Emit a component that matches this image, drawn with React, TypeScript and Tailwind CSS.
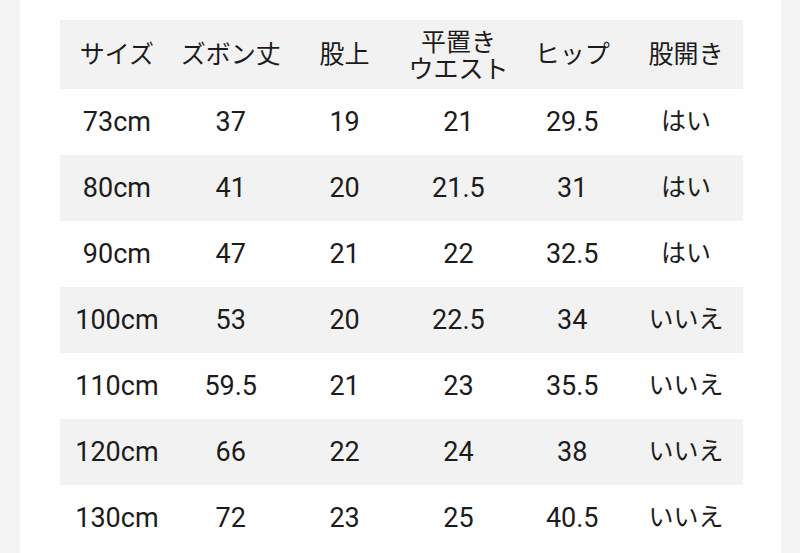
import React from "react";

const rows = [
  ["73cm", "37", "19", "21", "29.5", "はい"],
  ["80cm", "41", "20", "21.5", "31", "はい"],
  ["90cm", "47", "21", "22", "32.5", "はい"],
  ["100cm", "53", "20", "22.5", "34", "いいえ"],
  ["110cm", "59.5", "21", "23", "35.5", "いいえ"],
  ["120cm", "66", "22", "24", "38", "いいえ"],
  ["130cm", "72", "23", "25", "40.5", "いいえ"],
];

export default function App() {
  return (
    <div
      className="w-[800px] h-[553px] bg-[#f3f3f3] flex overflow-hidden text-[#1c1c1c]"
      style={{ fontFamily: 'Roboto, "Noto Sans CJK JP", sans-serif' }}
    >
      <div className="ml-[20px] w-[761px] h-full bg-[#fefefe] pl-[40px] pt-[20px]">
        <div className="w-[683px]">
          <div className="grid grid-cols-6 h-[69px] bg-[#f2f2f2] items-center text-[25px] leading-[26px] text-center">
            <div>サイズ</div>
            <div>ズボン丈</div>
            <div>股上</div>
            <div className="flex flex-col items-center pt-[3px]">
              <span className="leading-[27px]">平置き</span>
              <span className="leading-[27px]">ウエスト</span>
            </div>
            <div>ヒップ</div>
            <div>股開き</div>
          </div>
          {rows.map((r, i) => (
            <div
              key={i}
              className={`grid grid-cols-6 h-[66px] items-center text-center ${
                i % 2 === 1 ? "bg-[#f2f2f2]" : "bg-[#fefefe]"
              }`}
            >
              {r.map((c, j) => (
                <div key={j} className={j === 5 ? "text-[25px]" : "text-[27px]"}>
                  {c}
                </div>
              ))}
            </div>
          ))}
        </div>
      </div>
    </div>
  );
}
